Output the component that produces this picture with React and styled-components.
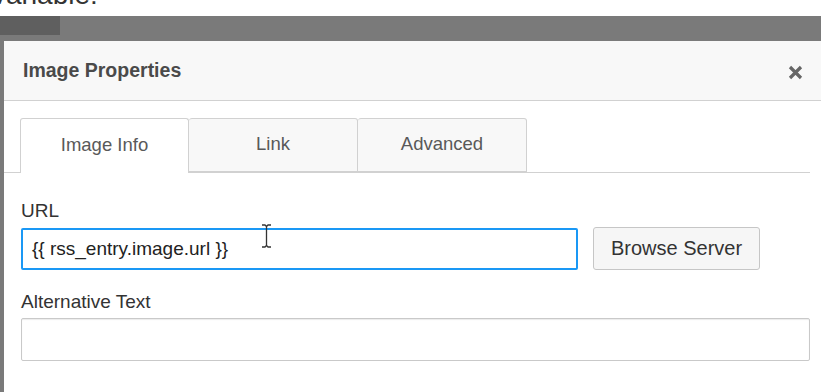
import { createGlobalStyle, styled } from "styled-components";

const GlobalStyle = createGlobalStyle`
  html, body {
    margin: 0;
    padding: 0;
    background: #ffffff;
    overflow: hidden;
  }
  body {
    font-family: "Liberation Sans", Arial, sans-serif;
  }
`;

const Page = styled.div`
  width: 821px;
  height: 392px;
  overflow: hidden;
  display: flex;
  flex-direction: column;
`;

const DocStrip = styled.div`
  height: 16px;
  overflow: hidden;
  background: #ffffff;
`;

const DocText = styled.div`
  margin-top: -21px;
  margin-left: -8px;
  font-size: 28px;
  line-height: 32px;
  color: #333;
`;

const OverlayBar = styled.div`
  height: 25px;
  background: #7a7a7a;
  display: flex;
`;

const OverlayTab = styled.div`
  width: 60px;
  height: 19px;
  background: #5f5f5f;
`;

const Body = styled.div`
  flex: 1;
  display: flex;
  min-height: 0;
`;

const OverlayEdge = styled.div`
  width: 4px;
  background: #7a7a7a;
`;

const Dialog = styled.div`
  flex: 1;
  background: #ffffff;
  display: flex;
  flex-direction: column;
`;

const Header = styled.div`
  height: 59px;
  background: #f8f8f8;
  border-bottom: 1px solid #d1d1d1;
  display: flex;
  align-items: center;
  justify-content: space-between;
  padding: 0 18px 0 19px;
`;

const Title = styled.h2`
  margin: 0;
  font-size: 19.5px;
  font-weight: 700;
  color: #4a4a4a;
`;

const Close = styled.button`
  border: 0;
  background: none;
  padding: 0;
  width: 16px;
  height: 16px;
  margin-top: 4px;
  display: flex;
  align-items: center;
  justify-content: center;
`;

const Content = styled.div`
  padding: 17px 11px 0 17px;
`;

const TabBar = styled.div`
  display: flex;
  margin-left: -17px;
  padding-left: 16px;
  border-bottom: 1px solid #d1d1d1;
  height: 54px;
  margin-bottom: 28px;
`;

const Tab = styled.div`
  width: 169px;
  box-sizing: border-box;
  height: ${({ $active }) => ($active ? "55px" : "54px")};
  border: 1px solid #d1d1d1;
  border-bottom: ${({ $active }) => ($active ? "none" : "1px solid #d1d1d1")};
  border-left: ${({ $first }) => ($first ? "1px solid #d1d1d1" : "none")};
  border-radius: 3px 3px 0 0;
  background: ${({ $active }) => ($active ? "#ffffff" : "#f8f8f8")};
  display: flex;
  align-items: center;
  justify-content: center;
  font-size: 18.5px;
  color: #595959;
  padding-bottom: 2px;
`;

const Field = styled.div`
  display: flex;
  flex-direction: column;
  gap: 6px;
  margin-bottom: ${({ $gap }) => $gap || "0"};
`;

const Label = styled.label`
  font-size: 19px;
  line-height: 20px;
  color: #333;
`;

const Row = styled.div`
  display: flex;
  align-items: center;
  gap: 15px;
  position: relative;
`;

const Input = styled.div`
  box-sizing: border-box;
  width: ${({ $w }) => $w};
  height: ${({ $focus }) => ($focus ? "42px" : "43px")};
  border: ${({ $focus }) => ($focus ? "2px solid #1a98f5" : "1px solid #c9c9c9")};
  border-radius: 2px;
  box-shadow: ${({ $focus }) => ($focus ? "none" : "inset 0 1px 1px rgba(0,0,0,0.08)")};
  padding: 0 9px;
  display: flex;
  align-items: center;
  font-size: 19px;
  color: #222;
`;

const Button = styled.button`
  box-sizing: border-box;
  width: 167px;
  height: 43px;
  border: 1px solid #c6c6c6;
  border-radius: 3px;
  background: #f6f6f6;
  font-family: "Liberation Sans", Arial, sans-serif;
  font-size: 20px;
  color: #333;
`;

const Cursor = styled.svg`
  position: absolute;
  left: 240px;
  top: -3px;
`;

export default function App() {
  return (
    <Page>
      <GlobalStyle />
      <DocStrip>
        <DocText>variable:</DocText>
      </DocStrip>
      <OverlayBar>
        <OverlayTab />
      </OverlayBar>
      <Body>
        <OverlayEdge />
        <Dialog>
          <Header>
            <Title>Image Properties</Title>
            <Close aria-label="Close">
              <svg width="15" height="15" viewBox="0 0 15 15">
                <path d="M2 2 L13 13 M13 2 L2 13" stroke="#666" strokeWidth="3.2" />
              </svg>
            </Close>
          </Header>
          <Content>
            <TabBar>
              <Tab $active $first>Image Info</Tab>
              <Tab>Link</Tab>
              <Tab>Advanced</Tab>
            </TabBar>
            <Field $gap="22px">
              <Label>URL</Label>
              <Row>
                <Input $focus $w="557px">{"{{ rss_entry.image.url }}"}</Input>
                <Button>Browse Server</Button>
                <Cursor width="11" height="24" viewBox="0 0 11 24">
                  <path d="M1 1 H4 L5.5 2.5 L7 1 H10 M5.5 2.5 V21.5 M1 23 H4 L5.5 21.5 L7 23 H10" stroke="#333" strokeWidth="1.3" fill="none" />
                </Cursor>
              </Row>
            </Field>
            <Field>
              <Label>Alternative Text</Label>
              <Row>
                <Input $w="789px" />
              </Row>
            </Field>
          </Content>
        </Dialog>
      </Body>
    </Page>
  );
}
